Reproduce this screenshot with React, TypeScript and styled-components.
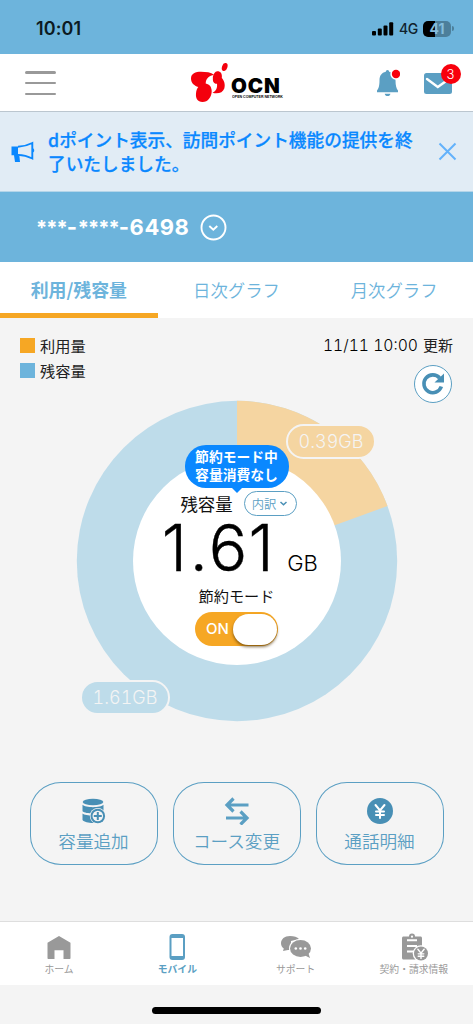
import React from 'react';
import styled, { createGlobalStyle } from 'styled-components';

const JP = '"Noto Sans CJK JP", sans-serif';
const C = { sky: '#6db4dc', blue: '#5b9fc3', deep: '#488fb5', orange: '#f6a724', bright: '#0a88ff', gray: '#999', bg: '#f4f4f4' };

const Global = createGlobalStyle`
  * { box-sizing: border-box; }
  body { margin: 0; background: ${C.bg}; font-family: ${JP}; }
  button { font: inherit; border: 0; background: none; padding: 0; margin: 0; color: inherit; }
  svg { display: block; flex: none; }
`;
const Screen = styled.div`width: 473px; height: 1024px; display: flex; flex-direction: column; background: ${C.bg}; overflow: hidden;`;

const StatusBar = styled.div`height: 54px; flex: none; background: ${C.sky}; display: flex; justify-content: space-between; align-items: center; padding: 3px 19px 0 36px;`;
const Clock = styled.div`font: 600 18px/24px Inter, sans-serif; letter-spacing: 0.1px; color: #0c1a22;`;
const StatusIcons = styled.div`display: flex; align-items: center;`;
const Network = styled.span`font: 500 14px/18px Inter, sans-serif; margin: 1px 6px 0 5px; color: #10222d; letter-spacing: -0.4px; width: 18px;`;
const Battery = styled.div`
  width: 28px; height: 16px; border-radius: 5px; margin-right: 3px; position: relative;
  background: linear-gradient(90deg, #000 0 12px, #4c7f9b 12px);
  font: 700 14px/16px Inter, sans-serif; text-align: center; color: #84bddd;
  &::after { content: ''; position: absolute; right: -3px; top: 5px; width: 2px; height: 5px; border-radius: 0 2px 2px 0; background: #4c7f9b; }
`;

const Header = styled.header`height: 58px; flex: none; background: #fff; border-bottom: 1px solid #bbc6cf; display: flex; align-items: center; padding: 0 21px 0 25px;`;
const Menu = styled.button`width: 31px; height: 24px; display: flex; flex-direction: column; justify-content: space-between; margin-top: 1px;`;
const MenuLine = styled.span`height: 2.5px; width: 31px; border-radius: 2px; background: #999;`;
const Brand = styled.div`display: flex; margin-left: 134px; width: 94px; height: 42px;`;
const BrandText = styled.div`margin: 15px 0 0 1px; color: #000; width: 52px;`;
const BrandName = styled.div`font: 900 20.5px/18px Inter, sans-serif; letter-spacing: .9px; height: 19px; white-space: nowrap;`;
const BrandSub = styled.div`font: 700 8px/8px "Liberation Sans", sans-serif; white-space: nowrap; width: 104px; transform: scale(.445, .4); transform-origin: 0 0; margin-left: 1px;`;
const HeaderActions = styled.div`display: flex; margin-left: auto; align-items: center; gap: 24px; height: 44px;`;
const MailWrap = styled.div`position: relative; width: 28px; height: 21px; top: 0.5px;`;
const Badge = styled.span`position: absolute; right: -8.5px; top: -9px; width: 20px; height: 20px; border-radius: 50%; background: #f8000c; color: #fff; font: 300 13px/20px Inter, sans-serif; text-align: center;`;

const Notice = styled.section`height: 80px; flex: none; background: #e1ecf5; border-bottom: 1px solid #b4d5e9; display: flex; align-items: center; padding: 0 16px 0 10px;`;
const NoticeText = styled.p`margin: 0 0 1px 13px; width: 372px; color: ${C.bright}; font-size: 17.68px; line-height: 24px; font-weight: 500; white-space: nowrap; -webkit-text-stroke: .25px ${C.bright};`;
const Close = styled.button`margin: 0 0 1px auto;`;

const NumberBar = styled.section`height: 70px; flex: none; background: ${C.sky}; display: flex; align-items: center; padding: 0 0 0 36px; gap: 11px; color: #fff;`;
const PhoneNumber = styled.span`font: 700 22px/28px Inter, sans-serif; letter-spacing: .5px; width: 153px; white-space: nowrap; margin-top: 1px;`;
const Mask = styled.span`font-size: 20px; letter-spacing: -.9px;`;

const Tabs = styled.nav`height: 56px; flex: none; display: grid; grid-template-columns: repeat(3, 1fr); background: #fff;`;
const Tab = styled.button<{ $active?: boolean }>`
  color: ${C.sky}; font-size: ${p => (p.$active ? 17.9 : 17.4)}px; line-height: 24px; padding-top: ${p => (p.$active ? 3 : 0)}px; padding-bottom: ${p => (p.$active ? 0 : 1)}px; text-align: center;
  font-weight: ${p => (p.$active ? 700 : 350)}; border-bottom: ${p => (p.$active ? `5px solid ${C.orange}` : '0')}; white-space: nowrap;
`;

const Usage = styled.main`height: 603px; flex: none; padding-top: 15px; display: flex; flex-direction: column;`;
const Meta = styled.div`display: flex; justify-content: space-between; padding: 0 20px; height: 68px; flex: none;`;
const Legend = styled.div`display: flex; flex-direction: column; gap: 1px;`;
const LegendRow = styled.div`display: flex; align-items: center; gap: 5px; font-size: 15.2px; line-height: 24px; color: #222;`;
const Swatch = styled.i<{ $color: string }>`width: 15px; height: 15px; background: ${p => p.$color};`;
const Updated = styled.div`display: flex; flex-direction: column; align-items: flex-end;`;
const Stamp = styled.span`font-size: 15px; line-height: 24px; color: #222; white-space: nowrap;`;
const StampTime = styled.span`font-family: Inter, sans-serif; font-weight: 300; font-size: 15.7px; font-variant-numeric: tabular-nums; margin-right: 5px; color: #000;`;
const Refresh = styled.button`width: 38px; height: 38px; flex: none; margin: 7px 1px 0 0; border: 1.3px solid ${C.blue}; border-radius: 50%; background: #fff; display: grid; place-items: center;`;

const Chart = styled.section`width: 322px; height: 322px; margin: -1px 0 0 75.5px; position: relative; display: flex; flex: none; justify-content: center;`;
const Ring = styled.svg`position: absolute; inset: 0;`;
const Amount = styled.span<{ $x: number; $y: number; $color: string }>`
  position: absolute; left: ${p => p.$x}px; top: ${p => p.$y}px; width: 90px; height: 35px; border: 2.5px solid ${C.bg}; border-radius: 18px;
  background: ${p => p.$color}; color: ${C.bg}; font: 300 18px/32px Inter, sans-serif; font-variant-numeric: tabular-nums; text-align: center;
`;
const Center = styled.div`position: relative; display: flex; flex-direction: column; align-items: center; padding-top: 45px; width: 208px;`;
const Bubble = styled.div`
  width: 104px; height: 43px; border-radius: 21px; background: ${C.bright}; color: #fff; font-size: 13.8px; line-height: 17.6px; font-weight: 700; text-align: center; padding-top: 3px; position: relative; flex: none;
  &::after { content: ''; position: absolute; left: 47px; top: 42.5px; border: 5px solid transparent; border-top-color: ${C.bright}; border-bottom: 0; }
`;
const RemainRow = styled.div`display: flex; align-items: center; gap: 11px; font-size: 17.4px; line-height: 26px; color: #111; margin: 2px 0 0 4px; height: 27px;`;
const Detail = styled.button`width: 53px; height: 25px; border: 1.3px solid ${C.blue}; border-radius: 13px; background: #fff; display: flex; align-items: center; justify-content: center; gap: 3px; color: ${C.blue}; font-size: 12.3px; font-weight: 350; line-height: 20px;`;
const Total = styled.div`display: flex; height: 60px; width: 158px; align-items: baseline; color: #000; font-family: Inter, sans-serif; margin: 3px 0 0 4px;`;
const Digit = styled.span<{ $w: number }>`width: ${p => p.$w}px; font-size: 64px; line-height: 56px; font-weight: 300; text-align: center; white-space: nowrap; -webkit-text-stroke: .4px #000;`;
const Unit = styled.span`font-size: 22px; font-weight: 300; margin-left: 10px; letter-spacing: -.2px;`;
const SaveLabel = styled.div`font-size: 15.2px; line-height: 24px; color: #111; margin-top: 3px;`;
const Toggle = styled.button`width: 83px; height: 34px; border-radius: 17px; background: ${C.orange}; display: flex; align-items: center; justify-content: space-between; padding: 0 1px 0 11px; margin-top: 5px; color: #fff; font: 500 15px/20px Inter, sans-serif;`;
const Knob = styled.span`width: 44px; height: 31px; border-radius: 16px; background: #fff; box-shadow: 0 2px 3px rgba(80,50,0,.65);`;

const Actions = styled.div`display: grid; grid-template-columns: repeat(3, 128px); gap: 15px; margin: 60px 0 0 29.5px;`;
const Action = styled.button`height: 83px; border: 1.4px solid ${C.blue}; border-radius: 31px/29px; display: flex; flex-direction: column; align-items: center; padding-top: 14px; gap: 4px; color: ${C.blue}; font-size: 17.6px; font-weight: 350; line-height: 24px; white-space: nowrap;`;

const BottomNav = styled.nav`height: 64px; flex: none; background: #fff; border-top: 1px solid #dedede; display: grid; grid-template-columns: repeat(4, 1fr);`;
const NavItem = styled.button<{ $active?: boolean }>`display: flex; flex-direction: column; align-items: center; padding-top: 11px; color: ${p => (p.$active ? C.blue : C.gray)}; font-size: 9.8px; font-weight: ${p => (p.$active ? 700 : 400)}; line-height: 14px; gap: 1px; white-space: nowrap;`;
const HomeArea = styled.div`flex: 1; display: flex; justify-content: center; padding-top: 22px;`;
const HomeBar = styled.div`width: 169px; height: 7px; border-radius: 4px; background: #000;`;

const Yen = () => <path d="M-4.500-6 0-.5 4.500-6M0-.5V7M-4 .5H4M-4 4H4" fill="none" stroke="#fff" strokeWidth="2" strokeLinecap="round" />;

export default function App() {
  return (
    <Screen>
      <Global />
      <StatusBar>
        <Clock>10:01</Clock>
        <StatusIcons>
          <svg width="22" height="14" viewBox="0 0 22 14"><rect x="0" y="9" width="4" height="4.5" rx="1" /><rect x="5.8" y="6.5" width="4" height="7" rx="1" /><rect x="11.5" y="3.5" width="4" height="10" rx="1" /><rect x="17.2" y="0.3" width="4" height="13.2" rx="1" /></svg>
          <Network>4G</Network>
          <Battery>41</Battery>
        </StatusIcons>
      </StatusBar>
      <Header>
        <Menu aria-label="menu"><MenuLine /><MenuLine /><MenuLine /></Menu>
        <Brand>
          <svg width="40" height="42" viewBox="0 0 40 42" fill="#f4000d">
            <path d="M1 16.500C1 11.500 5.500 9.800 11 9.800c5 0 10 .6 13 3-4.500.8-8.300 3.700-8.300 8.700 4 .8 6 3.500 6 8C21.500 35 18 40 12.500 40 7.500 40 5.500 36 6 31.500c.2-3 1-4.800 2.300-6.500C4 23.500 1 21 1 16.500z" />
            <path d="M27.300 9.300c3.500 0 5 2.700 4.500 6.700 2.500 2.500 3.700 6.800 2.500 10.500-1.500 4.300-6.500 5.800-11.800 4.300 3.500-1.500 5-4.800 4.500-9-3.300.2-4.500-2.500-4.200-6 .4-3.500 2.200-6.500 4.500-6.500z" />
            <path d="M17 21.300c.3-3.500 2.500-5 5.500-5.500-.5 3 .2 5.500 2 6.700-.2 2-1 3.500-2.500 5-.3-3.200-2-5.400-5-6.200z" fill="#fff" />
            <ellipse cx="34.700" cy="5" rx="2.700" ry="4.100" transform="rotate(18 34.700 5)" />
          </svg>
          <BrandText><BrandName>OCN</BrandName><BrandSub>OPEN COMPUTER NETWORK</BrandSub></BrandText>
        </Brand>
        <HeaderActions>
          <svg width="24" height="28" viewBox="0 0 24 28" fill={C.blue}>
            <path d="M11.500 1c1 0 1.500.7 1.700 1.800 4.300.9 6.300 4 6.300 8.500 0 5.500 1 8.700 2.500 10.200v1.700H1v-1.700C2.500 20 3.500 17 3.500 11.300c0-4.500 2-7.600 6.300-8.500C10 1.700 10.500 1 11.500 1zM8.700 24.700h5.700c-.2 1.500-1.200 2.300-2.800 2.300s-2.600-.8-2.900-2.300z" />
            <circle cx="20" cy="5" r="5.700" fill="#fff" /><circle cx="20" cy="5" r="4.200" fill="#f8000c" />
          </svg>
          <MailWrap>
            <svg width="28" height="21" viewBox="0 0 28 21"><rect width="28" height="21" rx="2.500" fill={C.blue} /><path d="m3 6 10.800 8L25 6" fill="none" stroke="#fff" strokeWidth="2.400" strokeLinecap="round" /></svg>
            <Badge>3</Badge>
          </MailWrap>
        </HeaderActions>
      </Header>
      <Notice>
        <svg width="25" height="24" viewBox="0 0 25 24"><path d="M1.500 6.500H8v8.700h1.300L10 22H5L4 15.200H1.500z" fill={C.bright} /><path d="M8 6.800c5-.3 9.500-1.300 14.300-3.800v15.500C18 16.300 13.500 15 8 14.900" fill="none" stroke={C.bright} strokeWidth="1.900" /><path d="M22.500 8.300c2.300.3 2.300 4 0 4.300z" fill={C.bright} /></svg>
        <NoticeText>dポイント表示、訪問ポイント機能の提供を終<br />了いたしました。</NoticeText>
        <Close aria-label="close"><svg width="19" height="19" viewBox="0 0 19 19"><path d="m1.500 1.500 16 16m0-16-16 16" stroke="#63b2fb" strokeWidth="2" /></svg></Close>
      </Notice>
      <NumberBar>
        <PhoneNumber><Mask>***</Mask>-<Mask>****</Mask>-6498</PhoneNumber>
        <svg width="27" height="27" viewBox="0 0 27 27" fill="none" stroke="#fff" strokeWidth="1.900"><circle cx="13.500" cy="13.500" r="12" /><path d="m9.300 12 4 3.800 4-3.800" /></svg>
      </NumberBar>
      <Tabs><Tab $active>利用/残容量</Tab><Tab>日次グラフ</Tab><Tab>月次グラフ</Tab></Tabs>
      <Usage>
        <Meta>
          <Legend>
            <LegendRow><Swatch $color={C.orange} />利用量</LegendRow>
            <LegendRow><Swatch $color={C.sky} />残容量</LegendRow>
          </Legend>
          <Updated>
            <Stamp><StampTime>11/11 10:00</StampTime>更新</Stamp>
            <Refresh aria-label="refresh"><svg width="24" height="24" viewBox="0 0 24 24"><path d="M20.300 14.500A8.900 8.900 0 1 1 18.600 6" fill="none" stroke={C.deep} strokeWidth="3.600" /><path d="M23 1.500v9h-9.500z" fill={C.deep} /></svg></Refresh>
          </Updated>
        </Meta>
        <Chart>
          <Ring width="322" height="322" viewBox="-161 -161 322 322">
            <circle r="160.200" fill="#bedcea" />
            <path d="M0 0V-160.200A160.200 160.200 0 0 1 150.500-55z" fill="#f5d5a1" />
            <circle r="104" fill="#fff" />
          </Ring>
          <Amount $x={210.500} $y={23.500} $color="#f5d5a1">0.39GB</Amount>
          <Amount $x={4.500} $y={280} $color="#bedcea">1.61GB</Amount>
          <Center>
            <Bubble>節約モード中<br />容量消費なし</Bubble>
            <RemainRow>残容量<Detail>内訳<svg width="9" height="7" viewBox="0 0 9 7"><path d="m1.500 2 3 2.700 3-2.700" fill="none" stroke={C.deep} strokeWidth="1.500" /></svg></Detail></RemainRow>
            <Total><Digit $w={30}>1</Digit><Digit $w={20}>.</Digit><Digit $w={36}>6</Digit><Digit $w={33}>1</Digit><Unit>GB</Unit></Total>
            <SaveLabel>節約モード</SaveLabel>
            <Toggle>ON<Knob /></Toggle>
          </Center>
        </Chart>
        <Actions>
          <Action>
            <svg width="28" height="28" viewBox="0 0 28 28" fill={C.deep}>
              <ellipse cx="13" cy="5" rx="10.300" ry="3.200" />
              <path d="M2.500 7.800c3 3.200 18 3.200 21 0v6.500c-3 3-18 3-21 0zM2.500 16.500c3 2.800 18 2.800 21 0v6.500c-3 4-18 4-21 0z" />
              <circle cx="17.800" cy="19" r="8" fill={C.bg} /><circle cx="17.800" cy="19" r="7.300" /><circle cx="17.800" cy="19" r="5.300" fill={C.bg} />
              <path d="M13.800 19h8m-4-4v8" stroke={C.deep} strokeWidth="2" />
            </svg>容量追加
          </Action>
          <Action>
            <svg width="28" height="28" viewBox="0 0 28 28" fill="none" stroke={C.blue} strokeWidth="3.200"><path d="M25.500 8H4M10.500 1.500 4 8l6.500 6.500M3 21h21M17.500 14.500 24 21l-6.500 6.500" /></svg>コース変更
          </Action>
          <Action>
            <svg width="28" height="28" viewBox="-14 -14 28 28"><circle r="13" fill={C.deep} /><Yen /></svg>通話明細
          </Action>
        </Actions>
      </Usage>
      <BottomNav>
        <NavItem><svg width="28" height="28" viewBox="0 0 28 28" fill={C.gray}><path d="m14 3 11.500 6.700V25c0 .6-.4 1-1 1H18.500v-8.700h-9V26h-6c-.6 0-1-.4-1-1V9.700z" /></svg>ホーム</NavItem>
        <NavItem $active><svg width="28" height="28" viewBox="0 0 28 28"><rect x="6.500" y="1" width="15.500" height="26" rx="3" fill={C.blue} /><rect x="8.500" y="5" width="11.500" height="18" fill="#fff" /></svg>モバイル</NavItem>
        <NavItem>
          <svg width="32" height="28" viewBox="0 0 32 28" fill={C.gray}>
            <path d="M10 3C4.500 3 1 6.200 1 10.300c0 2.200 1 4 2.800 5.300L3 18l5-1h3V8l8-2C17.500 4 14 3 10 3z" />
            <ellipse cx="20.500" cy="15.500" rx="11.500" ry="9.500" fill="#fff" /><ellipse cx="20.500" cy="15.500" rx="10.500" ry="8.500" /><path d="m24 22 6 3-2-6z" />
            <g fill="#fff"><circle cx="15.800" cy="15.500" r="1.300" /><circle cx="20.500" cy="15.500" r="1.300" /><circle cx="25.200" cy="15.500" r="1.300" /></g>
          </svg>サポート
        </NavItem>
        <NavItem>
          <svg width="28" height="28" viewBox="0 0 28 28" fill={C.gray}>
            <path d="M3.500 3.500h5.500a3 3 0 0 1 6 0h5.500c.8 0 1.500.7 1.500 1.500V25c0 .8-.7 1.500-1.500 1.500h-17C2.700 26.500 2 25.800 2 25V5c0-.8.700-1.500 1.500-1.500z" />
            <path d="M7 7.200h10M7 13h10M7 18.500h7" stroke="#fff" strokeWidth="2" /><circle cx="12" cy="3.700" r="1.100" fill="#fff" />
            <circle cx="21" cy="20.500" r="8.300" fill="#fff" /><circle cx="21" cy="20.500" r="7" /><g transform="translate(21 20.500) scale(.7)"><Yen /></g>
          </svg>契約・請求情報
        </NavItem>
      </BottomNav>
      <HomeArea><HomeBar /></HomeArea>
    </Screen>
  );
}
